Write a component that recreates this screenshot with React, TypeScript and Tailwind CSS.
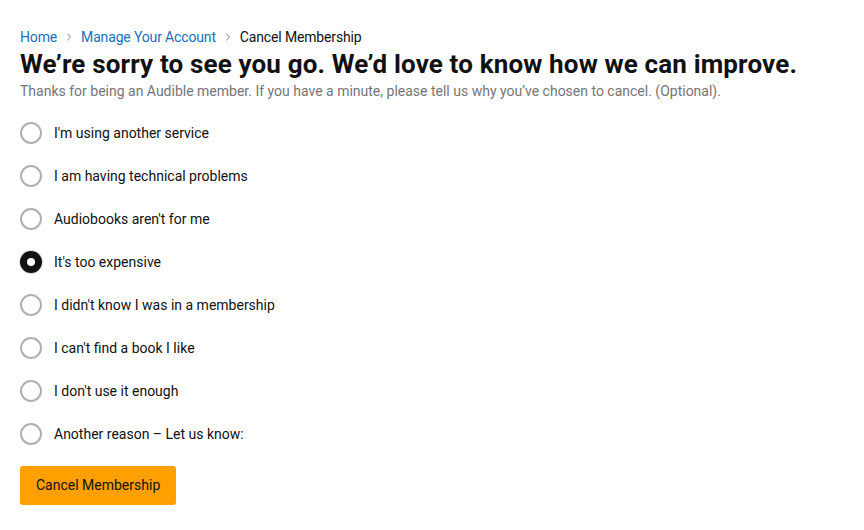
import { useState } from 'react'
import { ChevronRight } from 'lucide-react'

const reasons = [
  "I'm using another service",
  'I am having technical problems',
  "Audiobooks aren't for me",
  "It's too expensive",
  "I didn't know I was in a membership",
  "I can't find a book I like",
  "I don't use it enough",
  'Another reason – Let us know:',
]

export default function App() {
  const [selected, setSelected] = useState(3)

  return (
    <div className="min-h-[530px] w-[864px] bg-white px-5 pt-[28px] text-[#111] [font-family:Roboto,'Liberation_Sans',sans-serif]">
      {/* breadcrumb */}
      <nav className="flex items-center text-[14px] leading-[18px] tracking-[-0.15px]">
        <a href="#" className="text-[#1a6fb8]">Home</a>
        <ChevronRight size={12} strokeWidth={1.5} className="mx-[6px] text-[#555]" />
        <a href="#" className="text-[#1a6fb8]">Manage Your Account</a>
        <ChevronRight size={12} strokeWidth={1.5} className="mx-[6px] text-[#555]" />
        <span className="text-[#111]">Cancel Membership</span>
      </nav>

      <h1 className="mt-[2px] text-[26px] font-bold leading-[32px] tracking-[0.15px] text-[#111]">
        We’re sorry to see you go. We’d love to know how we can improve.
      </h1>
      <p className="mt-[2px] text-[14px] leading-[18px] text-[#757575]">
        Thanks for being an Audible member. If you have a minute, please tell us why you’ve chosen to cancel. (Optional).
      </p>

      <div className="mt-[22px] flex flex-col gap-[21px]">
        {reasons.map((r, i) => {
          const on = selected === i
          return (
            <label key={r} className="flex cursor-pointer items-center gap-[12px]" onClick={() => setSelected(i)}>
              <span
                className={
                  on
                    ? 'flex h-[22px] w-[22px] items-center justify-center rounded-full bg-[#111] shadow-[0_0_0_1px_#ddd]'
                    : 'h-[22px] w-[22px] rounded-full border-2 border-[#b0b0b0]'
                }
              >
                {on && <span className="h-[8px] w-[8px] rounded-full bg-white" />}
              </span>
              <span className="text-[14px] leading-[22px] text-[#111]">{r}</span>
            </label>
          )
        })}
      </div>

      <button className="mt-[21px] h-[39px] rounded-[3px] bg-[#ff9f00] px-4 text-[14px] text-[#111]">
        Cancel Membership
      </button>
    </div>
  )
}
